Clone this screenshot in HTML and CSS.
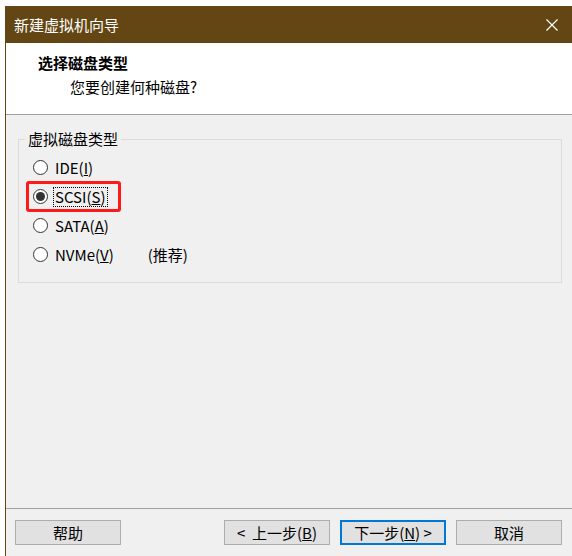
FILE: index.html
```html
<!DOCTYPE html>
<html lang="zh-CN">
<head>
    <meta charset="UTF-8">
    <title>新建虚拟机向导</title>
    <link rel="stylesheet" href="styles.css">
</head>
<body>
    <div class="window">
        <div class="titlebar">
            <span class="title">新建虚拟机向导</span>
            <svg class="close" width="12" height="12" viewBox="0 0 12 12">
                <path d="M0.5 0.5 L11.5 11.5 M11.5 0.5 L0.5 11.5" stroke="#fff" stroke-width="1.2" fill="none"/>
            </svg>
        </div>

        <div class="header">
            <h1>选择磁盘类型</h1>
            <p>您要创建何种磁盘?</p>
        </div>

        <div class="content">
            <fieldset class="group">
                <legend>虚拟磁盘类型</legend>
                <div class="option">
                    <span class="radio"></span>
                    <span class="label">IDE(<u>I</u>)</span>
                </div>
                <div class="option marked">
                    <span class="radio checked"></span>
                    <span class="label focus">SCSI(<u>S</u>)</span>
                </div>
                <div class="option">
                    <span class="radio"></span>
                    <span class="label">SATA(<u>A</u>)</span>
                </div>
                <div class="option">
                    <span class="radio"></span>
                    <span class="label">NVMe(<u>V</u>)</span>
                    <span class="hint">(推荐)</span>
                </div>
            </fieldset>
        </div>

        <div class="footer">
            <button class="btn">帮助</button>
            <div class="spacer"></div>
            <button class="btn">&lt;&nbsp; 上一步(<u>B</u>)</button>
            <button class="btn default">下一步(<u>N</u>) &gt;</button>
            <button class="btn">取消</button>
        </div>
    </div>
</body>
</html>
```

FILE: styles.css
```css
body {
    margin: 0;
    background: #fff;
    font-family: "Noto Sans CJK SC", "Noto Sans", sans-serif;
    font-size: 15px;
    color: #000;
}

.window {
    margin: 6px 0 0 5px;
    height: 550px;
    border-left: 1px solid #634614;
    display: flex;
    flex-direction: column;
    background: #f0f0f0;
    overflow: hidden;
}

.titlebar {
    height: 37px;
    flex-shrink: 0;
    background: #634614;
    color: #fff;
    display: flex;
    align-items: center;
    justify-content: space-between;
    padding: 0 14px 0 8px;
}

.title {
    font-size: 15px;
}

.header {
    height: 72px;
    flex-shrink: 0;
    background: #fff;
    border-bottom: 1px solid #a0a0a0;
    box-sizing: border-box;
    padding: 9px 0 0 32px;
}

.header h1 {
    margin: 0;
    font-size: 15px;
    font-weight: bold;
    line-height: 22px;
}

.header p {
    margin: 2px 0 0 32px;
    line-height: 22px;
}

.content {
    flex: 1;
    padding: 14px 10px 0 12px;
}

.group {
    margin: 0;
    padding: 4px 0 0 0;
    border: 1px solid #dcdcdc;
    height: 154px;
    box-sizing: border-box;
}

.group legend {
    margin-left: 6px;
    padding: 0 3px;
    line-height: 20px;
}

.option {
    display: flex;
    align-items: center;
    height: 29px;
    padding-left: 14px;
}

.option.marked {
    width: fit-content;
    height: 31px;
    box-sizing: border-box;
    margin: -1px 0 -1px 7px;
    padding: 0 10px 0 4px;
    border: 3px solid #ff1a1a;
    border-radius: 3px;
}

.radio {
    width: 13px;
    height: 13px;
    border: 1px solid #333;
    border-radius: 50%;
    background: #fff;
    margin-right: 5px;
    display: flex;
    align-items: center;
    justify-content: center;
}

.radio.checked::after {
    content: "";
    width: 9px;
    height: 9px;
    border-radius: 50%;
    background: #333;
}

.label {
    line-height: 18px;
    padding: 0 1px;
    border: 1px dotted transparent;
}

.label.focus {
    border-color: #000;
}

.hint {
    margin-left: 32px;
}

.footer {
    height: 48px;
    flex-shrink: 0;
    border-top: 1px solid #a0a0a0;
    display: flex;
    align-items: flex-start;
    gap: 10px;
    padding: 11px 10px 0 9px;
    box-sizing: border-box;
}

.spacer {
    flex: 1;
}

.btn {
    width: 106px;
    height: 25px;
    background: #e1e1e1;
    border: 1px solid #adadad;
    font-family: inherit;
    font-size: 15px;
    color: #000;
    padding: 0;
    line-height: 21px;
}

.btn.default {
    border: 2px solid #0078d7;
}
```
